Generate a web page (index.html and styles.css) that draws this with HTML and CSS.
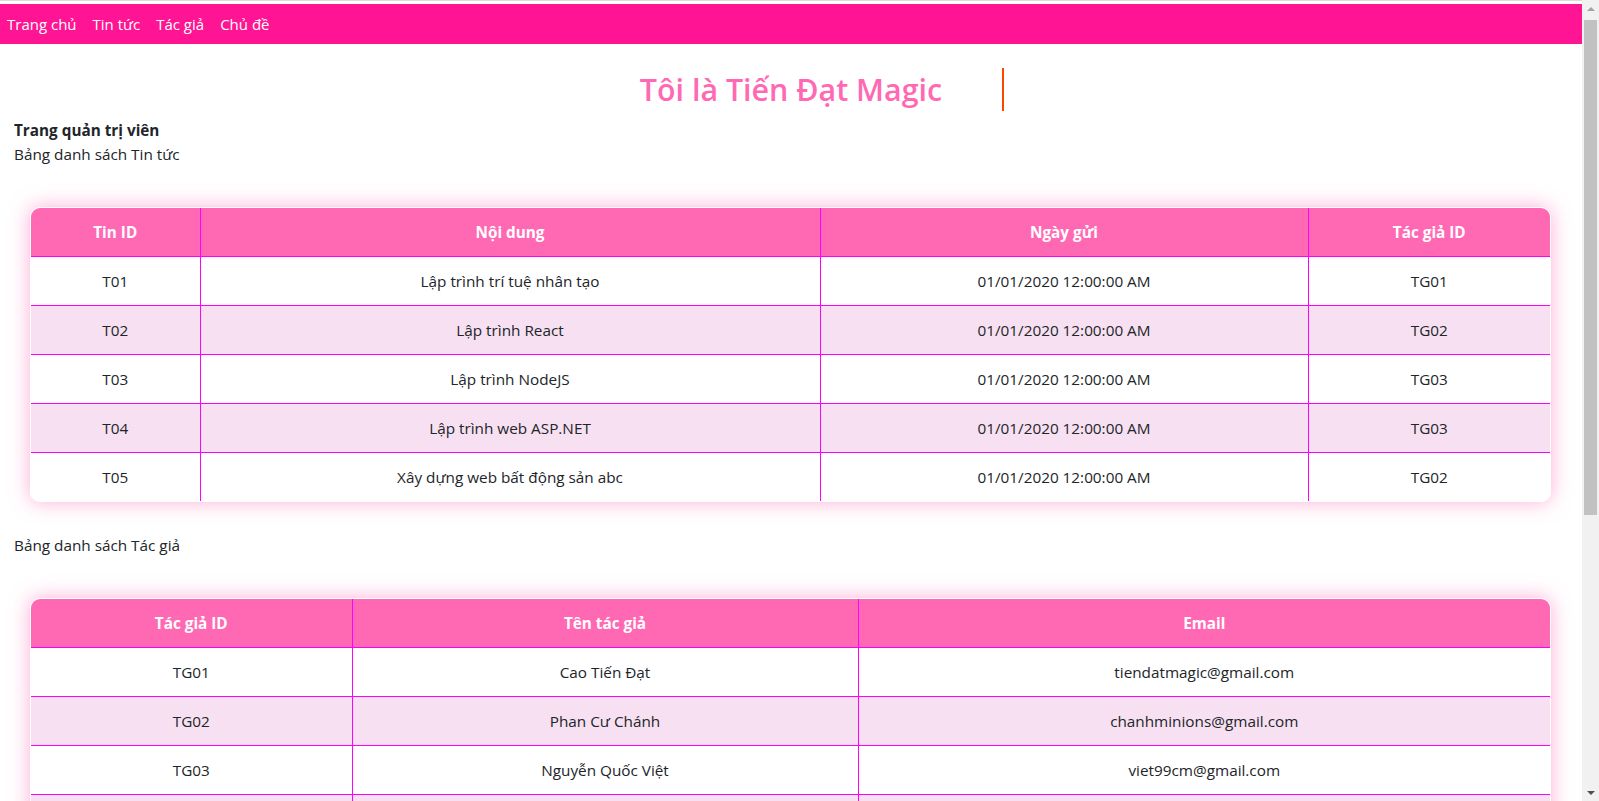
FILE: index.html
```html
<!DOCTYPE html>
<html lang="vi">
<head>
<meta charset="utf-8">
<title>Trang quản trị viên</title>
<link rel="stylesheet" href="styles.css">
</head>
<body>
<div class="window">
  <div class="page">
    <div class="topline"></div>
    <nav class="navbar">
      <a href="#">Trang chủ</a>
      <a href="#">Tin tức</a>
      <a href="#">Tác giả</a>
      <a href="#">Chủ đề</a>
    </nav>
    <main class="content">
      <h1 class="title"><span class="typing">Tôi là Tiến Đạt Magic</span></h1>
      <p class="admin">Trang quản trị viên</p>
      <p class="caption">Bảng danh sách Tin tức</p>
      <div class="table-card">
        <table class="data">
          <colgroup>
            <col class="c-news-id">
            <col class="c-news-content">
            <col class="c-news-date">
            <col>
          </colgroup>
          <thead>
            <tr><th>Tin ID</th><th>Nội dung</th><th>Ngày gửi</th><th>Tác giả ID</th></tr>
          </thead>
          <tbody>
            <tr><td>T01</td><td>Lập trình trí tuệ nhân tạo</td><td>01/01/2020 12:00:00 AM</td><td>TG01</td></tr>
            <tr><td>T02</td><td>Lập trình React</td><td>01/01/2020 12:00:00 AM</td><td>TG02</td></tr>
            <tr><td>T03</td><td>Lập trình NodeJS</td><td>01/01/2020 12:00:00 AM</td><td>TG03</td></tr>
            <tr><td>T04</td><td>Lập trình web ASP.NET</td><td>01/01/2020 12:00:00 AM</td><td>TG03</td></tr>
            <tr><td>T05</td><td>Xây dựng web bất động sản abc</td><td>01/01/2020 12:00:00 AM</td><td>TG02</td></tr>
          </tbody>
        </table>
      </div>
      <p class="caption">Bảng danh sách Tác giả</p>
      <div class="table-card">
        <table class="data">
          <colgroup>
            <col class="c-auth-id">
            <col class="c-auth-name">
            <col>
          </colgroup>
          <thead>
            <tr><th>Tác giả ID</th><th>Tên tác giả</th><th>Email</th></tr>
          </thead>
          <tbody>
            <tr><td>TG01</td><td>Cao Tiến Đạt</td><td>tiendatmagic@gmail.com</td></tr>
            <tr><td>TG02</td><td>Phan Cư Chánh</td><td>chanhminions@gmail.com</td></tr>
            <tr><td>TG03</td><td>Nguyễn Quốc Việt</td><td>viet99cm@gmail.com</td></tr>
            <tr><td>&nbsp;</td><td>&nbsp;</td><td>&nbsp;</td></tr>
          </tbody>
        </table>
      </div>
    </main>
  </div>
  <div class="vscroll" aria-hidden="true">
    <div class="arrow"><span class="tri-up"></span></div>
    <div class="thumb"></div>
    <div class="track-rest"></div>
    <div class="arrow"><span class="tri-down"></span></div>
  </div>
</div>
</body>
</html>
```

FILE: styles.css
```css
html, body {
  margin: 0;
  padding: 0;
}

body {
  font-family: "Open Sans", "Noto Sans", sans-serif;
  font-size: 15.3px;
  line-height: 24px;
  color: #212529;
  background: #ffffff;
}

.window {
  display: flex;
  height: 100vh;
  overflow: hidden;
}

.page {
  flex: 1 1 auto;
  min-width: 0;
  overflow: hidden;
}

/* classic scrollbar column */
.vscroll {
  flex: 0 0 17px;
  display: flex;
  flex-direction: column;
  align-items: center;
  background: #f1f1f1;
}

.arrow {
  width: 17px;
  height: 17px;
  display: flex;
  align-items: center;
  justify-content: center;
}

.tri-up {
  width: 0;
  height: 0;
  border-left: 4px solid transparent;
  border-right: 4px solid transparent;
  border-bottom: 4px solid #a3a3a3;
}

.tri-down {
  width: 0;
  height: 0;
  border-left: 4px solid transparent;
  border-right: 4px solid transparent;
  border-top: 4px solid #505050;
}

.thumb {
  width: 13px;
  height: 495px;
  margin-top: 3px;
  background: #c1c1c1;
}

.track-rest {
  flex: 1 1 auto;
}

.topline {
  height: 1px;
  background: #dcdcdc;
  margin-bottom: 3px;
}

.navbar {
  display: flex;
  align-items: center;
  height: 40px;
  background: #ff1493;
  font-size: 15px;
}

.navbar a {
  color: #ffffff;
  text-decoration: none;
  padding: 0 8px;
  line-height: 40px;
}

.navbar a:first-child {
  padding-left: 7px;
}

.content {
  padding: 0 14px 40px;
}

.title {
  margin: 24px 0 7px;
  text-align: center;
  font-size: 30.4px;
  font-weight: 600;
  line-height: 43px;
  color: #ff69b4;
}

.typing {
  display: inline-block;
  padding-right: 60px;
  margin-left: 62px;
  border-right: 2px solid #ff4500;
}

.admin {
  margin: 0;
  font-weight: 700;
}

.caption {
  margin: 0;
}

.table-card {
  margin: 41px 17px 31px 16px;
  border: 1px solid #ffffff;
  border-radius: 10px;
  overflow: hidden;
  box-shadow: 0 0 20px rgba(255, 105, 180, 0.55);
}

.data {
  width: 100%;
  border-collapse: collapse;
  table-layout: fixed;
}

.c-news-id { width: 169px; }
.c-news-content { width: 620px; }
.c-news-date { width: 488px; }
.c-auth-id { width: 321px; }
.c-auth-name { width: 506px; }

.data th,
.data td {
  padding: 12px;
  text-align: center;
}

.data th {
  background: #ff69b4;
  color: #ffffff;
  font-weight: 700;
  border-bottom: 1px solid #ff00ff;
}

.data th + th,
.data td + td {
  border-left: 1px solid #ff00ff;
}

.data tbody tr + tr td {
  border-top: 1px solid #ff00ff;
}

.data tbody tr:nth-child(even) {
  background: #f7e0f1;
}
```
